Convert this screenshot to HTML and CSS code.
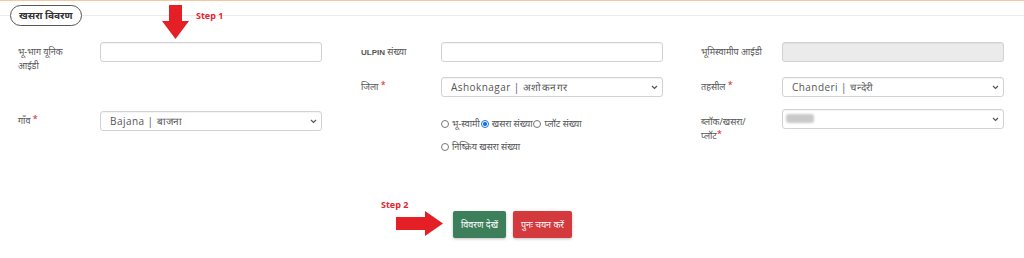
FILE: index.html
```html
<!DOCTYPE html>
<html lang="hi">
<head>
<meta charset="utf-8">
<link rel="stylesheet" href="styles.css">
</head>
<body>
<div class="page">
  <fieldset class="panel">
    <legend class="legend">खसरा विवरण</legend>

    <div class="annot step1">
      <svg class="arrow-down" width="28" height="35" viewBox="0 0 28 35"><path d="M7 0H20V16H27L13.5 34L0 16H7Z" fill="#e41f26"/></svg>
      <span class="step-text">Step 1</span>
    </div>

    <div class="grid">
      <div class="cell c1">
        <label class="lbl">भू-भाग यूनिक<br>आईडी</label>
        <input class="ctrl" type="text">
      </div>
      <div class="cell c2">
        <label class="lbl"><b class="ulpin">ULPIN</b> संख्या</label>
        <input class="ctrl" type="text">
      </div>
      <div class="cell c3">
        <label class="lbl">भूमिस्वामीप आईडी</label>
        <input class="ctrl disabled" type="text" disabled>
      </div>

      <div class="cell c1"></div>
      <div class="cell c2">
        <label class="lbl">जिला <span class="req">*</span></label>
        <div class="selwrap">
          <select class="ctrl sel"><option>Ashoknagar | अशोकनगर</option></select>
          <svg class="chev" width="7" height="5" viewBox="0 0 7 5"><path d="M1 1L3.5 3.5L6 1" fill="none" stroke="#555" stroke-width="1.2"/></svg>
        </div>
      </div>
      <div class="cell c3">
        <label class="lbl">तहसील <span class="req">*</span></label>
        <div class="selwrap">
          <select class="ctrl sel"><option>Chanderi | चन्देरी</option></select>
          <svg class="chev" width="7" height="5" viewBox="0 0 7 5"><path d="M1 1L3.5 3.5L6 1" fill="none" stroke="#555" stroke-width="1.2"/></svg>
        </div>
      </div>

      <div class="cell c1">
        <label class="lbl">गाँव <span class="req">*</span></label>
        <div class="selwrap">
          <select class="ctrl sel"><option>Bajana | बाजना</option></select>
          <svg class="chev" width="7" height="5" viewBox="0 0 7 5"><path d="M1 1L3.5 3.5L6 1" fill="none" stroke="#555" stroke-width="1.2"/></svg>
        </div>
      </div>
      <div class="cell c2">
        <span class="lbl"></span>
        <div class="radios">
          <div class="rline">
            <span class="radio"></span>भू-स्वामी
            <span class="radio on"></span>खसरा संख्या
            <span class="radio"></span>प्लॉट संख्या
          </div>
          <div class="rline">
            <span class="radio"></span>निष्क्रिय खसरा संख्या
          </div>
        </div>
      </div>
      <div class="cell c3 up">
        <label class="lbl">ब्लॉक/खसरा/<br>प्लॉट<span class="req">*</span></label>
        <div class="selwrap">
          <select class="ctrl sel"><option>&nbsp;</option></select>
          <span class="blur"></span>
          <svg class="chev" width="7" height="5" viewBox="0 0 7 5"><path d="M1 1L3.5 3.5L6 1" fill="none" stroke="#555" stroke-width="1.2"/></svg>
        </div>
      </div>
    </div>

    <div class="actions">
      <div class="annot step2">
        <span class="step-text">Step 2</span>
        <svg class="arrow-right" width="48" height="25" viewBox="0 0 48 25"><path d="M0 6H29V0L47 12.5L29 25V19H0Z" fill="#e41f26"/></svg>
      </div>
      <button class="btn green">विवरण देखें</button>
      <button class="btn red">पुनः चयन करें</button>
    </div>
  </fieldset>
</div>
</body>
</html>
```

FILE: styles.css
```css
html, body {
  margin: 0;
  padding: 0;
  background: #ffffff;
}
body {
  font-family: "Noto Sans", "Liberation Sans", "Noto Sans Devanagari", sans-serif;
  color: #555;
  width: 1024px;
  height: 258px;
  overflow: hidden;
}
.page {
  border-top: 1px solid #f6c7a3;
  height: 257px;
}
.panel {
  position: relative;
  margin: 4px 0 0 0;
  padding: 16px 0 0 0;
  border: none;
  border-top: 1px solid #e8eaec;
  min-width: 0;
}
.legend {
  margin-left: 10px;
  padding: 0 8px;
  height: 19px;
  line-height: 19px;
  border: 1px solid #555;
  border-radius: 11px;
  font-size: 10px;
  font-weight: bold;
  color: #333;
}
.annot {
  position: absolute;
  display: flex;
}
.step1 {
  left: 162px;
  top: -21px;
  align-items: flex-start;
  gap: 6px;
}
.step1 .step-text {
  margin-top: 4px;
}
.step-text {
  color: #e5262c;
  font-family: "Open Sans", "Liberation Sans", sans-serif;
  font-weight: bold;
  font-size: 9px;
}
.grid {
  display: grid;
  grid-template-columns: 341px 341px 342px;
  grid-template-rows: 35px 34px auto;
}
.cell {
  display: grid;
  grid-template-columns: 82px 222px;
  align-items: start;
}
.c1 { padding-left: 18px; }
.c2 { padding-left: 20px; grid-template-columns: 80px 222px; }
.c3 { padding-left: 19px; grid-template-columns: 81px 222px; }
.up { margin-top: -2px; }
.up .lbl { padding-top: 6px; }
.lbl {
  font-size: 9px;
  line-height: 14px;
  padding-top: 3px;
  color: #555;
}
.ulpin {
  font-family: "Liberation Sans", sans-serif;
  font-size: 8px;
  color: #555;
}
.req {
  color: #e0262c;
  font-size: 9px;
  vertical-align: top;
  position: relative;
  top: -2px;
}
.ctrl {
  box-sizing: border-box;
  width: 222px;
  height: 20px;
  margin: 0;
  border: 1px solid #d2d2d2;
  border-radius: 3px;
  background: #fff;
  box-shadow: inset 0 1px 1px rgba(0,0,0,0.05);
  font-family: "Open Sans", "Liberation Sans", sans-serif;
  font-size: 10px;
  color: #555;
  letter-spacing: 0.45px;
  padding: 0 6px;
  display: block;
}
.disabled {
  background: #ebebeb;
}
.sel {
  -webkit-appearance: none;
  appearance: none;
  padding-left: 9px;
}
.selwrap {
  position: relative;
  width: 222px;
  height: 20px;
}
.chev {
  position: absolute;
  right: 5px;
  top: 8px;
  pointer-events: none;
}
.blur {
  position: absolute;
  left: 4px;
  top: 5px;
  width: 28px;
  height: 9px;
  border-radius: 3px;
  background: #c9c9c9;
  filter: blur(1px);
}
.radios {
  font-size: 9px;
  color: #555;
  padding-top: 1px;
}
.rline {
  line-height: 23px;
  display: flex;
  align-items: center;
}
.radio {
  display: inline-block;
  box-sizing: border-box;
  width: 8px;
  height: 8px;
  border: 1px solid #777;
  border-radius: 50%;
  margin-right: 3px;
  margin-left: 1px;
  background: #fff;
}
.radio:first-child { margin-left: 0; }
.radio.on {
  border: 1px solid #1a73e8;
  background: radial-gradient(circle, #1a73e8 0 2px, #fff 2.2px);
}
.actions {
  position: relative;
  display: flex;
  justify-content: center;
  gap: 7px;
  margin-top: 53px;
  padding-left: 1px;
}
.step2 {
  left: 381px;
  top: -13px;
  flex-direction: column;
  align-items: flex-start;
}
.step2 .arrow-right {
  margin-left: 15px;
  margin-top: 0;
}
.btn {
  height: 27px;
  border: none;
  border-radius: 2px;
  color: #fff;
  font-family: "Noto Sans", "Liberation Sans", sans-serif;
  font-size: 9px;
  padding: 0;
  white-space: nowrap;
  box-shadow: 0 1px 3px rgba(0,0,0,0.25);
}
.green {
  background: #3e7f5b;
  width: 53px;
}
.red {
  background: #d43a3d;
  width: 59px;
}
```
